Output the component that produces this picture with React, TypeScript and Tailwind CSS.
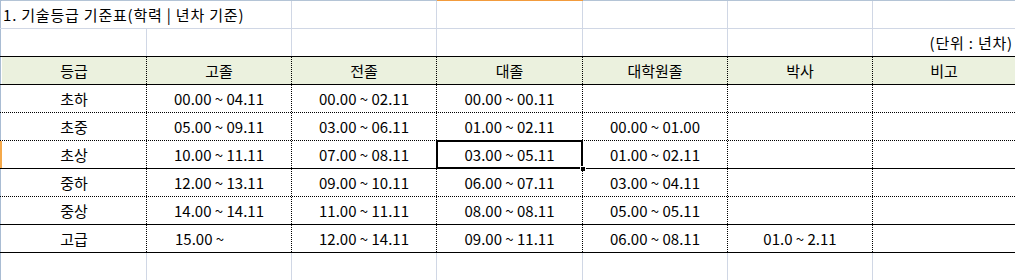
import React from "react";

const widths = ["w-[145px]", "w-[145px]", "w-[145px]", "w-[146px]", "w-[145px]", "w-[145px]", "flex-1"];

const headers = ["등급", "고졸", "전졸", "대졸", "대학원졸", "박사", "비고"];

type Row = {
  cells: string[];
  line: "dotted" | "solid";
};

const rows: Row[] = [
  { cells: ["초하", "00.00 ~ 04.11", "00.00 ~ 02.11", "00.00 ~ 00.11", "", "", ""], line: "dotted" },
  { cells: ["초중", "05.00 ~ 09.11", "03.00 ~ 06.11", "01.00 ~ 02.11", "00.00 ~ 01.00", "", ""], line: "dotted" },
  { cells: ["초상", "10.00 ~ 11.11", "07.00 ~ 08.11", "03.00 ~ 05.11", "01.00 ~ 02.11", "", ""], line: "solid" },
  { cells: ["중하", "12.00 ~ 13.11", "09.00 ~ 10.11", "06.00 ~ 07.11", "03.00 ~ 04.11", "", ""], line: "dotted" },
  { cells: ["중상", "14.00 ~ 14.11", "11.00 ~ 11.11", "08.00 ~ 08.11", "05.00 ~ 05.11", "", ""], line: "solid" },
  { cells: ["고급", "15.00 ~", "12.00 ~ 14.11", "09.00 ~ 11.11", "06.00 ~ 08.11", "01.0 ~ 2.11", ""], line: "solid" },
];

// left edge of the row header column (orange on the active row)
const Edge = ({ active }: { active?: boolean }) => (
  <div className={active ? "w-[2px] shrink-0 bg-[#f5a94a]" : "w-[2px] shrink-0 border-l border-[#a9bcd3] bg-white"} />
);

const App = () => {
  return (
    <div className="w-[1015px] h-[280px] overflow-hidden bg-white text-black text-[15px] font-['Noto_Sans_CJK_KR',sans-serif]">
      {/* column header edge */}
      <div className="flex h-[1px]">
        <div className="w-[2px] bg-[#a9bcd3]" />
        {widths.map((w, i) => (
          <div key={i} className={`${w} ${i === 3 ? "bg-[#f29b3c]" : "bg-[#b4c4d6]"}`} />
        ))}
      </div>

      {/* title */}
      <div className="flex h-[28px] border-b border-[#d0d7e5]">
        <Edge />
        <div className="w-[290px] flex items-center pl-[1px] pt-[1px] tracking-[0.8px] whitespace-nowrap border-r border-[#d0d7e5]">
          1. 기술등급 기준표(학력 | 년차 기준)
        </div>
        {widths.slice(2).map((w, i) => (
          <div key={i} className={`${w} ${i < 4 ? "border-r border-[#d0d7e5]" : ""}`} />
        ))}
      </div>

      {/* unit */}
      <div className="flex h-[28px] border-b border-black">
        <Edge />
        {widths.map((w, i) => (
          <div
            key={i}
            className={`${w} flex items-center justify-end pr-[2px] pt-[1px] tracking-[0.8px] ${i < 6 ? "border-r border-[#d0d7e5]" : ""}`}
          >
            {i === 6 ? "(단위 : 년차)" : ""}
          </div>
        ))}
      </div>

      {/* header */}
      <div className="flex h-[28px] border-b border-black bg-[#ebf1de]">
        <Edge />
        {headers.map((h, i) => (
          <div
            key={h}
            className={`${widths[i]} flex items-center justify-center pt-[1px] ${i < 6 ? "border-r border-dotted border-black" : ""}`}
          >
            {h}
          </div>
        ))}
      </div>

      {/* body */}
      {rows.map((row, r) => (
        <div
          key={r}
          className={`flex h-[28px] border-b border-black ${row.line === "dotted" ? "border-dotted" : "border-solid"}`}
        >
          <Edge active={r === 2} />
          {row.cells.map((c, i) => (
            <div
              key={i}
              className={`${widths[i]} relative flex items-center pt-[1px] ${
                r === 5 && i === 1 ? "justify-start pl-[28px]" : "justify-center"
              } ${i < 6 ? "border-r border-dotted border-black" : ""}`}
            >
              {c}
              {r === 2 && i === 3 && (
                <>
                  <div className="absolute -left-[1px] -top-[1px] -right-[1px] -bottom-[1px] border-2 border-black" />
                  <div className="absolute -right-[4px] -bottom-[4px] w-[6px] h-[6px] bg-black border border-white" />
                </>
              )}
            </div>
          ))}
        </div>
      ))}

      {/* empty row */}
      <div className="flex h-[28px]">
        <Edge />
        {widths.map((w, i) => (
          <div key={i} className={`${w} ${i < 6 ? "border-r border-[#d0d7e5]" : ""}`} />
        ))}
      </div>
    </div>
  );
};

export default App;
